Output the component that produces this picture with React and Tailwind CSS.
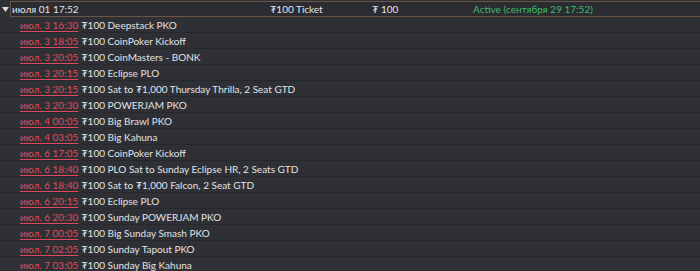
import React from 'react';

const rows = [
  ['июл. 3 16:30', '₮100 Deepstack PKO'],
  ['июл. 3 18:05', '₮100 CoinPoker Kickoff'],
  ['июл. 3 20:05', '₮100 CoinMasters - BONK'],
  ['июл. 3 20:15', '₮100 Eclipse PLO'],
  ['июл. 3 20:15', '₮100 Sat to ₮1,000 Thursday Thrilla, 2 Seat GTD'],
  ['июл. 3 20:30', '₮100 POWERJAM PKO'],
  ['июл. 4 00:05', '₮100 Big Brawl PKO'],
  ['июл. 4 03:05', '₮100 Big Kahuna'],
  ['июл. 6 17:05', '₮100 CoinPoker Kickoff'],
  ['июл. 6 18:40', '₮100 PLO Sat to Sunday Eclipse HR, 2 Seats GTD'],
  ['июл. 6 18:40', '₮100 Sat to ₮1,000 Falcon, 2 Seat GTD'],
  ['июл. 6 20:15', '₮100 Eclipse PLO'],
  ['июл. 6 20:30', '₮100 Sunday POWERJAM PKO'],
  ['июл. 7 00:05', '₮100 Big Sunday Smash PKO'],
  ['июл. 7 02:05', '₮100 Sunday Tapout PKO'],
  ['июл. 7 03:05', '₮100 Sunday Big Kahuna'],
];

export default function App() {
  return (
    <div className="w-[700px] h-[271px] overflow-hidden bg-[#2e3035] text-[10px] leading-none text-[#e2e3e6] font-['Lato','Noto_Sans',sans-serif]">
      <div className="flex h-[17px] pt-[1px]">
        <div className="w-[10px] flex items-center justify-center">
          <svg width="7" height="5" viewBox="0 0 7 5">
            <path d="M0 0 H7 L3.5 5 Z" fill="#d8d8d8" />
          </svg>
        </div>
        <div className="flex flex-1 items-center border-y border-l border-[#6a5444] bg-[#2a2c31]">
          <div className="w-[259px] pl-[1px]">июля 01 17:52</div>
          <div className="w-[102px]">₮100 Ticket</div>
          <div className="w-[101px]">₮ 100</div>
          <div className="text-[#3dbb6b]">Active (сентября 29 17:52)</div>
        </div>
      </div>
      {rows.map(([date, name], i) => (
        <div key={i} className="flex h-[16px] items-center border-b border-[#26282c] pl-[20px]">
          <span className="text-[#e0485c] underline underline-offset-[1.5px]">{date}</span>
          <span className="ml-[3px]">{name}</span>
        </div>
      ))}
    </div>
  );
}
